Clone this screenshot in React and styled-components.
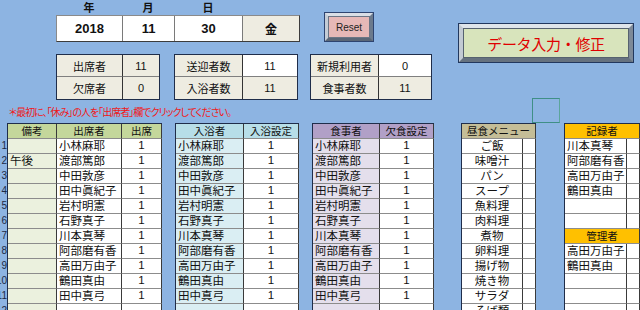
import React from 'react';
import styled, { createGlobalStyle } from 'styled-components';

const GlobalStyle = createGlobalStyle`
  html, body {
    margin: 0;
    padding: 0;
    background: #8db4e2;
    font-family: "Noto Sans CJK JP", "Liberation Sans", sans-serif;
    overflow: hidden;
  }
`

const Sheet = styled.div`
  position: relative;
  width: 640px;
  height: 310px;
  overflow: hidden;
  background: #8db4e2;
  color: #111;
`

const Top = styled.div`
  display: flex;
  height: 98px;
`

const LeftBlock = styled.div`
  margin-left: 56px;
  width: 376px;
`

const DateLabels = styled.div`
  display: grid;
  grid-template-columns: 66px 52px 68px;
  height: 15px;
  font-size: 11px;
  font-weight: bold;
  line-height: 15px;
  text-align: center;
`

const DateLine = styled.div`
  display: flex;
  align-items: flex-start;
`

const DateBox = styled.div`
  display: grid;
  grid-template-columns: 66px 52px 68px 56px;
  height: 27px;
  box-sizing: border-box;
  border: 1px solid #3c3c3c;
  border-top-color: #8a8a8a;
  border-left-color: #8a8a8a;
`

const DateCell = styled.div`
  display: flex;
  align-items: center;
  justify-content: center;
  background: ${p => (p.$tan ? '#eeece1' : '#fff')};
  border-right: ${p => (p.$last ? 'none' : '1px solid #7a7a7a')};
  font-family: ${p => (p.$jp ? '"Noto Sans CJK JP", sans-serif' : '"Liberation Sans", Arial, sans-serif')};
  font-size: ${p => (p.$jp ? '12px' : '13px')};
  font-weight: ${p => (p.$jp ? 'bold' : '600')};
`

const ResetButton = styled.button`
  margin-left: 25px;
  margin-top: -2px;
  width: 48px;
  height: 28px;
  box-sizing: border-box;
  padding: 0;
  background: #e6b8b7;
  border: 3px solid;
  border-color: #d9dee6 #6c7a8c #5a6677 #c4ccd6;
  box-shadow: 0 0 0 1px #2e4470, inset 0 0 0 1px #6a7585;
  font-family: "Liberation Sans", Arial, sans-serif;
  font-size: 10px;
  color: #222;
`

const StatsRow = styled.div`
  display: flex;
  margin-top: 12px;
  gap: 14px;
`

const StatBox = styled.div`
  display: grid;
  grid-template-columns: ${p => p.$cols};
  grid-auto-rows: 22px;
  box-sizing: border-box;
  border: 1px solid #1f2d4a;
  margin-left: ${p => p.$shift || 0}px;
`

const StatCell = styled.div`
  display: flex;
  align-items: center;
  justify-content: center;
  background: ${p => (p.$white ? '#fff' : '#eeece1')};
  border-right: ${p => (p.$right ? '1px solid #333' : 'none')};
  border-bottom: ${p => (p.$bottom ? '1px solid #7f7f7f' : 'none')};
  font-family: ${p => (p.$num ? '"Liberation Sans", Arial, sans-serif' : '"Noto Sans CJK JP", sans-serif')};
  font-size: 11px;
`

const BigButton = styled.button`
  margin-left: 27px;
  margin-top: 24px;
  width: 174px;
  height: 38px;
  box-sizing: border-box;
  padding: 0;
  background: #d8e4bc;
  border: 4px solid;
  border-color: #dfe5eb #7d8998 #66727f #c2cad3;
  box-shadow: 0 0 0 1px #22385e, inset 0 0 0 1px #56626f;
  color: #e00000;
  font-family: "Noto Sans CJK JP", sans-serif;
  font-size: 15px;
  letter-spacing: -0.3px;
`

const Selection = styled.div`
  position: absolute;
  left: 532px;
  top: 98px;
  width: 28px;
  height: 25px;
  box-sizing: border-box;
  border: 1px solid #3f8f86;
  border-right-color: #5ba59b;
`

const Note = styled.div`
  height: 25px;
  padding: 7px 0 0 9px;
  box-sizing: border-box;
  font-size: 10px;
  line-height: 13px;
  letter-spacing: -1px;
  color: #f01818;
  font-feature-settings: "palt";
`

const Tables = styled.div`
  display: flex;
  align-items: flex-start;
`

const RowNums = styled.div`
  width: 8px;
  overflow: hidden;
  display: flex;
  flex-direction: column;
  font-family: "Liberation Sans", Arial, sans-serif;
  font-size: 10px;
  color: #1b2a44;
`

const RowNum = styled.div`
  display: flex;
  align-items: center;
  justify-content: flex-end;
  width: 8px;
  height: 15px;
  flex-shrink: 0;
  padding-right: 1px;
  box-sizing: border-box;
  white-space: nowrap;
`

const Table = styled.div`
  display: grid;
  grid-template-columns: ${p => p.$cols};
  grid-auto-rows: 15px;
  margin-left: ${p => p.$gap}px;
  box-sizing: border-box;
  border-left: 1px solid #1f2d4a;
  border-top: 1px solid #1f2d4a;
`

const Cell = styled.div`
  box-sizing: border-box;
  display: flex;
  align-items: center;
  justify-content: ${p => (p.$center ? 'center' : 'flex-start')};
  padding-left: ${p => (p.$center ? 0 : 2)}px;
  background: ${p => p.$bg || '#fff'};
  border-right: 1px solid #3a3a3a;
  border-bottom: 1px solid #8c8c8c;
  font-size: ${p => (p.$head ? '10.5px' : '11.5px')};
  font-family: ${p => (p.$num ? '"Liberation Sans", Arial, sans-serif' : '"Noto Sans CJK JP", sans-serif')};
  white-space: nowrap;
  overflow: hidden;
  line-height: 1;
`

const names = ['小林麻耶', '渡部篤郎', '中田敦彦', '田中眞紀子', '岩村明憲', '石野真子', '川本真琴', '阿部磨有香', '高田万由子', '鶴田真由', '田中真弓', '']
const menu = ['ご飯', '味噌汁', 'パン', 'スープ', '魚料理', '肉料理', '煮物', '卵料理', '揚げ物', '焼き物', 'サラダ', 'そば類']
const staff = ['川本真琴', '阿部磨有香', '高田万由子', '鶴田真由', '', '', null, '高田万由子', '鶴田真由', '', '', '']

const App = () => {
  return (
    <>
      <GlobalStyle />
      <Sheet>
        <Top>
          <LeftBlock>
            <DateLabels>
              <span>年</span>
              <span>月</span>
              <span>日</span>
            </DateLabels>
            <DateLine>
              <DateBox>
                <DateCell>2018</DateCell>
                <DateCell>11</DateCell>
                <DateCell>30</DateCell>
                <DateCell $tan $jp $last>金</DateCell>
              </DateBox>
              <ResetButton>Reset</ResetButton>
            </DateLine>
            <StatsRow>
              <StatBox $cols="66px 36px">
                <StatCell $right $bottom>出席者</StatCell>
                <StatCell $num $bottom>11</StatCell>
                <StatCell $right>欠席者</StatCell>
                <StatCell $num>0</StatCell>
              </StatBox>
              <StatBox $cols="68px 54px">
                <StatCell $right $bottom>送迎者数</StatCell>
                <StatCell $num $bottom $white>11</StatCell>
                <StatCell $right>入浴者数</StatCell>
                <StatCell $num>11</StatCell>
              </StatBox>
              <StatBox $cols="68px 52px" $shift={-2}>
                <StatCell $right $bottom>新規利用者</StatCell>
                <StatCell $num $bottom $white>0</StatCell>
                <StatCell $right>食事者数</StatCell>
                <StatCell $num>11</StatCell>
              </StatBox>
            </StatsRow>
          </LeftBlock>
          <BigButton>データ入力・修正</BigButton>
        </Top>
        <Selection />
        <Note>＊最初に、「休み」の人を「出席者」欄でクリックしてください。</Note>
        <Tables>
          <RowNums>
            <RowNum />
            {names.map((n, i) => (
              <RowNum key={i}>{i + 1}</RowNum>
            ))}
          </RowNums>

          <Table $cols="49px 65px 40px" $gap={0}>
            <Cell $head $center $bg="#c4d79b">備考</Cell>
            <Cell $head $center $bg="#c4d79b">出席者</Cell>
            <Cell $head $center $bg="#c4d79b">出席</Cell>
            {names.map((n, i) => (
              <React.Fragment key={i}>
                <Cell $bg="#ebf1de">{i === 1 ? '午後' : ''}</Cell>
                <Cell>{n}</Cell>
                <Cell $center $num>{n ? '1' : ''}</Cell>
              </React.Fragment>
            ))}
          </Table>

          <Table $cols="68px 55px" $gap={13}>
            <Cell $head $center $bg="#b7dee8">入浴者</Cell>
            <Cell $head $center $bg="#b7dee8">入浴設定</Cell>
            {names.map((n, i) => (
              <React.Fragment key={i}>
                <Cell $bg="#daeef3">{n}</Cell>
                <Cell $center $num>{n ? '1' : ''}</Cell>
              </React.Fragment>
            ))}
          </Table>

          <Table $cols="67px 54px" $gap={13}>
            <Cell $head $center $bg="#b1a0c7">食事者</Cell>
            <Cell $head $center $bg="#b1a0c7">欠食設定</Cell>
            {names.map((n, i) => (
              <React.Fragment key={i}>
                <Cell $bg="#e4dfec">{n}</Cell>
                <Cell $center $num>{n ? '1' : ''}</Cell>
              </React.Fragment>
            ))}
          </Table>

          <Table $cols="61px 13px" $gap={27}>
            <Cell $head $center $bg="#c4bd97" style={{ gridColumn: 'span 2' }}>昼食メニュー</Cell>
            {menu.map((m, i) => (
              <React.Fragment key={i}>
                <Cell $center>{m}</Cell>
                <Cell />
              </React.Fragment>
            ))}
          </Table>

          <Table $cols="62px 13px" $gap={28}>
            <Cell $head $center $bg="#ffc000" style={{ gridColumn: 'span 2' }}>記録者</Cell>
            {staff.map((s, i) =>
              s === null ? (
                <Cell key={i} $head $center $bg="#ffc000" style={{ gridColumn: 'span 2' }}>管理者</Cell>
              ) : (
                <React.Fragment key={i}>
                  <Cell>{s}</Cell>
                  <Cell />
                </React.Fragment>
              )
            )}
          </Table>
        </Tables>
      </Sheet>
    </>
  );
};

export default App;
